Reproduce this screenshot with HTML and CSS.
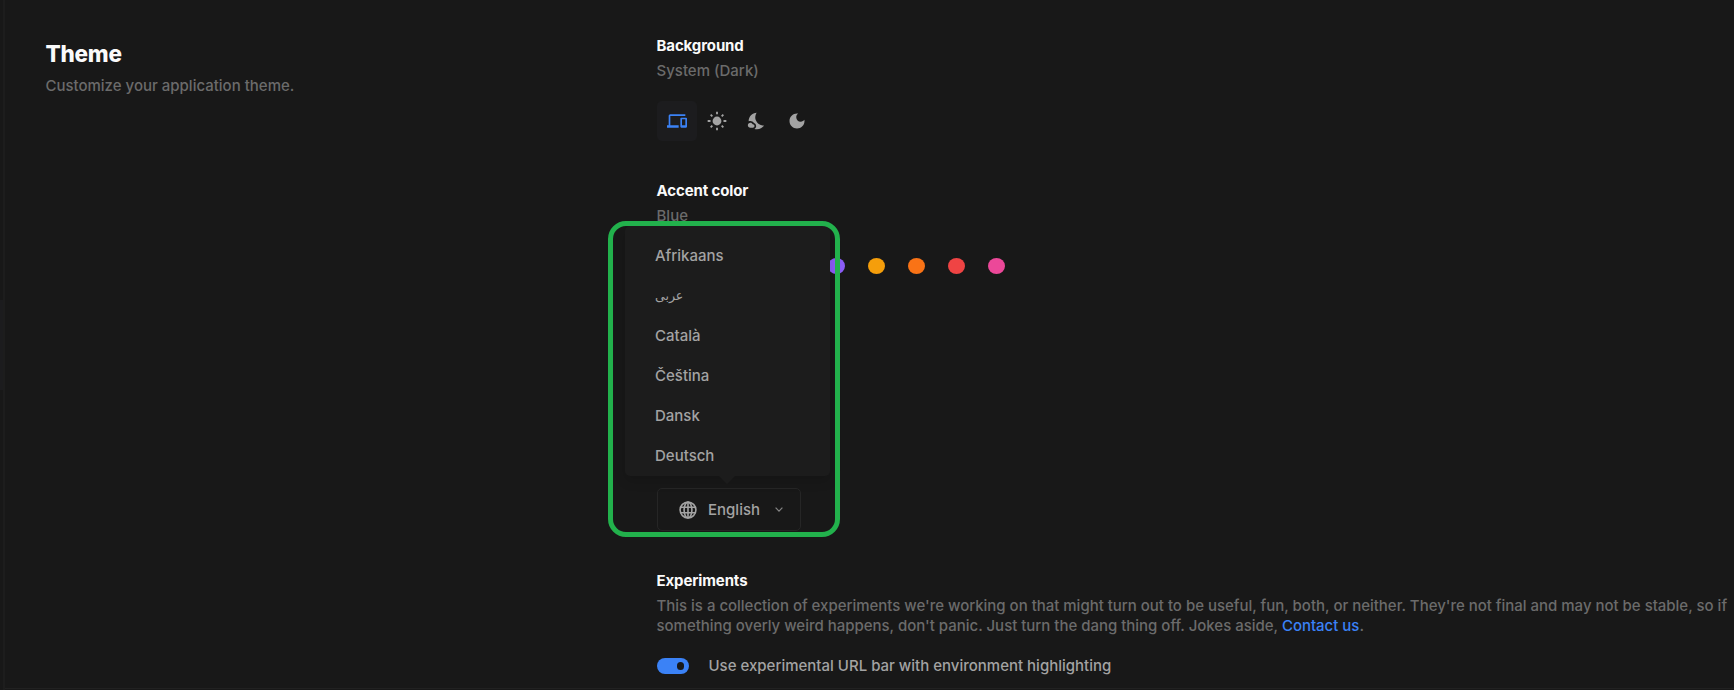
FILE: index.html
```html
<!DOCTYPE html>
<html lang="en">
<head>
<meta charset="utf-8">
<title>Settings</title>
<link rel="stylesheet" href="styles.css">
</head>
<body>
<div class="rail"><span class="rail-thumb"></span></div>
<main class="settings">
  <header class="intro">
    <h1 class="title">Theme</h1>
    <p class="muted">Customize your application theme.</p>
  </header>
  <div class="options">
    <section class="group background">
      <h2 class="label">Background</h2>
      <p class="muted">System (Dark)</p>
      <div class="modes">
        <button class="mode active" aria-label="System"><svg class="icon" viewBox="0 0 24 24"><path d="M4 6h18V4H4c-1.1 0-2 .9-2 2v11H0v3h14v-3H4V6zm19 2h-6c-.55 0-1 .45-1 1v10c0 .55.45 1 1 1h6c.55 0 1-.45 1-1V9c0-.55-.45-1-1-1zm-1 9h-4v-7h4v7z"/></svg></button>
        <button class="mode" aria-label="Light"><svg class="icon" viewBox="0 0 24 24"><circle cx="12" cy="12" r="5.3"/><path class="rays" d="M12 1v3M12 20v3M.8 12h3.4M19.8 12h3.4M4.4 4.4l2 2M17.6 17.6l2 2M4.4 19.6l2-2M17.6 6.4l2-2"/></svg></button>
        <button class="mode" aria-label="Dark"><svg class="icon" viewBox="0 0 24 24"><path d="M11.1 12.08c-2.33-4.51-.5-8.48.53-10.07C6.27 2.2 1.98 6.59 1.98 12c0 .14.02.28.02.42.62-.27 1.29-.42 2-.42 1.66 0 3.18.83 4.1 2.15A4.014 4.014 0 0111 18c0 1.52-.87 2.83-2.12 3.51.98.32 2.03.5 3.11.5 3.5 0 6.58-1.8 8.37-4.52-2.36.23-6.98-.97-9.26-5.41z"/><path d="M7 16h-.18C6.4 14.84 5.3 14 4 14c-1.66 0-3 1.34-3 3s1.34 3 3 3h3c1.1 0 2-.9 2-2s-.9-2-2-2z"/></svg></button>
        <button class="mode" aria-label="Black"><svg class="icon" viewBox="0 0 24 24"><path d="M12 3c-4.97 0-9 4.03-9 9s4.03 9 9 9 9-4.03 9-9c0-.46-.04-.92-.1-1.36-.98 1.37-2.58 2.26-4.4 2.26-2.98 0-5.4-2.42-5.4-5.4 0-1.81.89-3.42 2.26-4.4-.44-.06-.9-.1-1.36-.1z"/></svg></button>
      </div>
    </section>
    <section class="group accent">
      <h2 class="label">Accent color</h2>
      <p class="muted">Blue</p>
      <div class="swatches">
        <span class="swatch violet"></span>
        <span class="swatch amber"></span>
        <span class="swatch orange"></span>
        <span class="swatch red"></span>
        <span class="swatch pink"></span>
      </div>
    </section>
    <section class="group language">
      <button class="select">
        <svg class="globe" viewBox="0 0 18 18"><circle cx="9" cy="9" r="7.9"/><ellipse cx="9" cy="9" rx="3.9" ry="7.9"/><path d="M9 1v16M1.6 6.3h14.8M1.6 11.7h14.8"/></svg>
        <span>English</span>
        <svg class="chevron" viewBox="0 0 8 5"><path d="M.6.7 4 4.1 7.4.7"/></svg>
      </button>
      <div class="menu">
        <ul class="languages">
          <li>Afrikaans</li>
          <li class="arabic"><bdi>عربى</bdi></li>
          <li>Català</li>
          <li>Čeština</li>
          <li>Dansk</li>
          <li>Deutsch</li>
        </ul>
      </div>
      <div class="highlight"></div>
    </section>
    <section class="group experiments">
      <h2 class="label">Experiments</h2>
      <p class="muted about">This is a collection of experiments we're working on that might turn out to be useful, fun, both, or neither. They're not final and may not be stable, so if something overly weird happens, don't panic. Just turn the dang thing off. Jokes aside, <a class="link">Contact us</a>.</p>
      <div class="toggle-row"><span class="toggle"></span><span>Use experimental URL bar with environment highlighting</span></div>
    </section>
  </div>
</main>
</body>
</html>
```
FILE: styles.css
```css
* { box-sizing: border-box; margin: 0; padding: 0; }
body {
  display: flex;
  height: 690px;
  overflow: hidden;
  background: #181818;
  color: #a3a3a3;
  font: 500 15px/20px Inter, "Noto Sans", sans-serif;
}
button { background: none; border: 0; color: inherit; font: inherit; }
.rail { width: 5px; flex: none; padding-top: 300px; border-right: 2px solid #1d1d1d; }
.rail-thumb { display: block; width: 3px; height: 90px; background: #1c1c1e; }
.settings { display: flex; flex: 1; height: 689px; border-bottom: 1px solid #212121; }
.intro { width: 651.5px; flex: none; padding: 40px 0 0 40.4px; }
.title { margin-bottom: 8px; color: #fafafa; font-size: 22.5px; line-height: 28px; font-weight: 800; letter-spacing: -.2px; }
.muted { color: #6b6b6b; }
.label { margin-bottom: 5px; color: #fafafa; font-size: 15px; line-height: 20px; font-weight: 700; letter-spacing: -.12px; }
.options { flex: 1; min-width: 0; padding-top: 36px; }
.background { height: 145px; }
.accent { height: 307px; }
.modes { display: flex; margin-top: 20px; }
.mode { display: grid; place-items: center; width: 40px; height: 40px; border-radius: 5px; }
.active { background: #1c1c1e; color: #3b82f6; }
.icon { width: 20px; height: 20px; fill: currentColor; }
.rays { stroke: currentColor; stroke-width: 2.2; }
.swatches { display: flex; gap: 23px; margin: 32px 0 0 171.5px; }
.swatch { width: 17px; height: 16px; border-radius: 50%; }
.violet { background: #8b5cf6; }
.amber { background: #f59e0b; }
.orange { background: #f97316; }
.red { background: #ef4444; }
.pink { background: #ec4899; }
.language { position: relative; height: 83px; }
.select { display: flex; align-items: center; width: 144px; height: 43px; padding: 0 17px 0 21px; margin-left: .5px; border: 1px solid #262626; border-radius: 5px; }
.globe { width: 18px; height: 18px; margin-right: 11px; fill: none; stroke: currentColor; stroke-width: 1.6; }
.chevron { width: 8px; height: 5px; margin: 0 0 1px auto; fill: none; stroke: #858585; stroke-width: 1.2; }
.menu {
  position: absolute;
  left: -31.5px;
  bottom: 95px;
  width: 205px;
  height: 250px;
  padding: 10px 30px 0;
  background: #1c1c1c;
  border-radius: 5px;
  box-shadow: 0 5px 12px rgba(0, 0, 0, .14);
}
.menu::after {
  content: "";
  position: absolute;
  left: 94px;
  top: 100%;
  border: 8px solid transparent;
  border-top-color: #1c1c1c;
  border-bottom: 0;
}
.languages { display: grid; grid-auto-rows: 40px; align-items: center; list-style: none; }
.arabic { font: 400 12.5px/20px "DejaVu Sans", sans-serif; }
.highlight { position: absolute; left: -48.5px; top: -267px; width: 232px; height: 316px; border: 5px solid #22b14c; border-radius: 18px; }
.experiments { height: 110px; }
.about { letter-spacing: -.017px; }
.link { color: #3b82f6; }
.toggle-row { display: flex; align-items: center; gap: 20px; margin-top: 20px; }
.toggle { display: flex; justify-content: flex-end; align-items: center; width: 32px; height: 16px; padding-right: 5px; background: #3b82f6; border-radius: 8px; }
.toggle::after { content: ""; width: 7px; height: 8px; background: #181818; border-radius: 4px; }
```
